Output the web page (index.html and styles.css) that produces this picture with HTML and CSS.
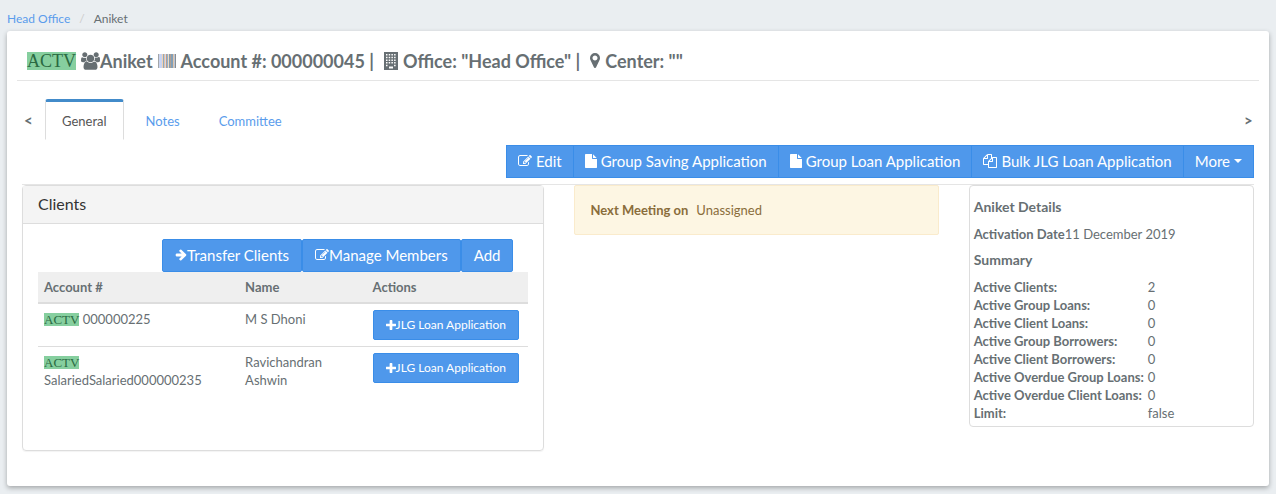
FILE: index.html
```html
<!DOCTYPE html>
<html lang="en">
<head>
<meta charset="utf-8">
<title>Aniket</title>
<link rel="stylesheet" href="styles.css">
</head>
<body>
<svg class="sprite" aria-hidden="true">
  <symbol id="i-file" viewBox="128 0 1536 1792"><path d="M1024 512v-472q22 14 36 28l408 408q14 14 28 36h-472zm-128 32q0 40 28 68t68 28h544v1056q0 40-28 68t-68 28h-1344q-40 0-68-28t-28-68v-1600q0-40 28-68t68-28h800v544z" transform="translate(128 0)"/></symbol>
  <symbol id="i-edit" viewBox="0 0 1792 1792"><path d="M888 1184l116-116-152-152-116 116v56h96v96h56zm440-720q-16-16-33 1l-350 350q-17 17-1 33t33-1l350-350q17-17 1-33zm80 594v190q0 119-84.500 203.500t-203.500 84.500h-832q-119 0-203.500-84.500t-84.500-203.500v-832q0-119 84.500-203.500t203.500-84.500h832q63 0 117 25 15 7 18 23 3 17-9 29l-49 49q-14 14-32 8-23-6-45-6h-832q-66 0-113 47t-47 113v832q0 66 47 113t113 47h832q66 0 113-47t47-113v-126q0-13 9-22l64-64q15-15 35-7t20 29zm-96-738l288 288-672 672h-288v-288zm444 132l-92 92-288-288 92-92q28-28 68-28t68 28l152 152q28 28 28 68t-28 68z"/></symbol>
  <symbol id="i-copy" viewBox="0 0 1792 1792"><path d="M1696 384q40 0 68 28t28 68v1216q0 40-28 68t-68 28h-960q-40 0-68-28t-28-68v-288h-544q-40 0-68-28t-28-68v-672q0-40 20-88t48-76l408-408q28-28 76-48t88-20h416q40 0 68 28t28 68v328q68-40 128-40h416zm-544 213l-299 299h299v-299zm-640-384l-299 299h299v-299zm196 647l316-316v-416h-384v416q0 40-28 68t-68 28h-416v640h512v-256q0-40 20-88t48-76zm956 804v-1152h-384v416q0 40-28 68t-68 28h-416v640h896z"/></symbol>
  <symbol id="i-arrow" viewBox="64 128 1600 1664"><path d="M1600 960q0 54-37 91l-651 651q-39 37-91 37-51 0-90-37l-75-75q-38-38-38-91t38-91l293-293h-704q-52 0-84.500-37.500t-32.500-90.500v-128q0-53 32.500-90.500t84.500-37.500h704l-293-294q-38-36-38-90t38-90l75-75q38-38 90-38 53 0 91 38l651 651q37 35 37 90z"/></symbol>
  <symbol id="i-plus" viewBox="192 128 1408 1408"><path d="M1600 736v192q0 40-28 68t-68 28h-416v416q0 40-28 68t-68 28h-192q-40 0-68-28t-28-68v-416h-416q-40 0-68-28t-28-68v-192q0-40 28-68t68-28h416v-416q0-40 28-68t68-28h192q40 0 68 28t28 68v416h416q40 0 68 28t28 68z"/></symbol>
  <symbol id="i-pin" viewBox="384 128 1024 1536"><path d="M1152 640q0-106-75-181t-181-75-181 75-75 181 75 181 181 75 181-75 75-181zm256 0q0 109-33 179l-364 774q-16 33-47.500 52t-67.500 19-67.500-19-46.500-52l-365-774q-33-70-33-179 0-212 150-362t362-150 362 150 150 362z"/></symbol>
  <symbol id="i-users" viewBox="64 0 1920 1792"><path d="M657 896q-162 5-265 128h-134q-82 0-138-40.500t-56-118.500q0-353 124-353 6 0 43.500 21t97.500 42.500 119 21.500q67 0 133-23-5 37-5 66 0 159 93 290zm1071 637q0 120-73 189.500t-194 69.500h-874q-121 0-194-69.500t-73-189.500q0-53 3.500-103.500t14-109 26.500-108.500 43-97.500 62-81 85.500-53.500 111.500-20q10 0 43 21.500t73 48 107 48 135 21.500 135-21.500 107-48 73-48 43-21.500q61 0 111.500 20t85.500 53.500 62 81 43 97.500 26.500 108.500 14 109 3.500 103.500zm-1024-1277q0 106-75 181t-181 75-181-75-75-181 75-181 181-75 181 75 75 181zm704 384q0 159-112.500 271.500t-271.500 112.500-271.500-112.500-112.500-271.500 112.500-271.500 271.500-112.500 271.500 112.500 112.500 271.500zm576 225q0 78-56 118.500t-138 40.500h-134q-103-123-265-128 93-131 93-290 0-29-5-66 66 23 133 23 59 0 119-21.500t97.500-42.500 43.500-21q124 0 124 353zm-128-609q0 106-75 181t-181 75-181-75-75-181 75-181 181-75 181 75 75 181z"/></symbol>
  <symbol id="i-building" viewBox="0 0 14 18"><path fill-rule="evenodd" d="M0 0h14v18H0zM2 2v1.500h1.500V2zM4.700 2v1.500h1.500V2zM7.400 2v1.500h1.500V2zM10.100 2v1.500h1.500V2zM2 4.700v1.500h1.500V4.700zM4.700 4.700v1.500h1.500V4.700zM7.400 4.700v1.500h1.500V4.700zM10.100 4.700v1.500h1.500V4.700zM2 7.400v1.500h1.500V7.400zM4.700 7.400v1.500h1.500V7.400zM7.400 7.400v1.500h1.500V7.400zM10.100 7.400v1.500h1.500V7.400zM2 10.100v1.500h1.500v-1.500zM4.700 10.100v1.500h1.500v-1.500zM7.400 10.100v1.500h1.500v-1.500zM10.100 10.100v1.500h1.500v-1.500zM2 12.800v1.500h1.500v-1.500zM10.100 12.800v1.500h1.500v-1.500zM5 14.500v2h4v-2z"/></symbol>
  <symbol id="i-barcode" viewBox="0 0 18 14">
    <path fill="#a3a6a8" d="M0 0h1v14H0z"/><path fill="#c9d4f2" d="M1 0h3v14H1z"/><path fill="#f1d2b4" d="M4 0h1v14H4z"/><path fill="#8ba9c2" d="M5 0h1v14H5z"/><path fill="#e8c3a4" d="M6 0h1v14H6z"/><path fill="#ccd8f0" d="M7 0h1v14H7z"/><path fill="#bd9d88" d="M8 0h1v14H8z"/><path fill="#8fb0d0" d="M9 0h1v14H9z"/><path fill="#f0d9bd" d="M10 0h1v14h-1z"/><path fill="#889bab" d="M11 0h1v14h-1z"/><path fill="#b1a093" d="M12 0h1v14h-1z"/><path fill="#829fb7" d="M13 0h2v14h-2z"/><path fill="#e0c3a8" d="M15 0h1v14h-1z"/><path fill="#b8c6da" d="M16 0h1v14h-1z"/><path fill="#888c90" d="M17 0h1v14h-1z"/>
  </symbol>
</svg>

<nav class="breadcrumb" aria-label="Breadcrumb">
  <a href="#">Head Office</a><span class="slash">/</span><span>Aniket</span>
</nav>

<main class="card">
  <h1 class="title">
    <span class="status">ACTV</span>
    <span class="name"><svg class="users"><use href="#i-users"/></svg>Aniket</span>
    <svg class="barcode"><use href="#i-barcode"/></svg>
    <span class="field">Account #: 000000045 |</span>
    <svg class="building"><use href="#i-building"/></svg>
    <span class="field">Office: "Head Office" |</span>
    <svg class="pin"><use href="#i-pin"/></svg>
    <span class="field">Center: ""</span>
  </h1>

  <div class="body">
    <nav class="tabs">
      <button class="scroll" type="button">&lt;</button>
      <a class="tab active" href="#">General</a>
      <a class="tab" href="#">Notes</a>
      <a class="tab" href="#">Committee</a>
      <button class="scroll last" type="button">&gt;</button>
    </nav>

    <div class="toolbar">
      <button class="btn" type="button"><svg class="edit"><use href="#i-edit"/></svg>Edit</button>
      <button class="btn" type="button"><svg class="file"><use href="#i-file"/></svg>Group Saving Application</button>
      <button class="btn" type="button"><svg class="file"><use href="#i-file"/></svg>Group Loan Application</button>
      <button class="btn" type="button"><svg class="edit"><use href="#i-copy"/></svg>Bulk JLG Loan Application</button>
      <button class="btn" type="button">More<span class="caret"></span></button>
    </div>

    <div class="columns">
      <section class="panel">
        <h2 class="panel-head">Clients</h2>
        <div class="panel-body">
          <div class="actions">
            <button class="btn" type="button"><svg class="arrow"><use href="#i-arrow"/></svg>Transfer Clients</button>
            <button class="btn" type="button"><svg class="edit"><use href="#i-edit"/></svg>Manage Members</button>
            <button class="btn" type="button">Add</button>
          </div>
          <table class="clients">
            <thead><tr><th class="c-account">Account #</th><th class="c-name">Name</th><th>Actions</th></tr></thead>
            <tbody>
              <tr>
                <td><span class="status small">ACTV</span> 000000225</td>
                <td>M S Dhoni</td>
                <td><button class="btn btn-small" type="button"><svg class="plus"><use href="#i-plus"/></svg>JLG Loan Application</button></td>
              </tr>
              <tr>
                <td><span class="status small">ACTV</span> SalariedSalaried000000235</td>
                <td>Ravichandran Ashwin</td>
                <td><button class="btn btn-small" type="button"><svg class="plus"><use href="#i-plus"/></svg>JLG Loan Application</button></td>
              </tr>
            </tbody>
          </table>
        </div>
      </section>

      <div class="meeting"><strong>Next Meeting on</strong><span>Unassigned</span></div>

      <section class="details">
        <h3>Aniket Details</h3>
        <p><strong>Activation Date</strong>11 December 2019</p>
        <h3>Summary</h3>
        <table class="summary">
          <tr><th>Active Clients:</th><td>2</td></tr>
          <tr><th>Active Group Loans:</th><td>0</td></tr>
          <tr><th>Active Client Loans:</th><td>0</td></tr>
          <tr><th>Active Group Borrowers:</th><td>0</td></tr>
          <tr><th>Active Client Borrowers:</th><td>0</td></tr>
          <tr><th>Active Overdue Group Loans:</th><td>0</td></tr>
          <tr><th>Active Overdue Client Loans:</th><td>0</td></tr>
          <tr><th>Limit:</th><td>false</td></tr>
        </table>
      </section>
    </div>
  </div>
</main>
</body>
</html>
```
FILE: styles.css
```css
* { box-sizing: border-box; }

body {
  margin: 0;
  padding: 10px 7px 8px;
  background: #eaeef1;
  color: #676f73;
  font: 13px/18px Muli, Lato, sans-serif;
}

.sprite { display: none; }
svg { fill: currentColor; flex: none; }
a { color: #5a9cec; text-decoration: none; }
button { font: inherit; color: inherit; }
h1, h2, h3, p { margin: 0; }

.breadcrumb { display: flex; font-size: 12px; padding-bottom: 3px; }
.slash { color: #ccc; padding: 0 9px; }

.card {
  background: #fff;
  border-radius: 3px;
  box-shadow: 0 2px 5px rgba(0, 0, 0, .3);
  padding: 10px 10px 35px;
}

.title {
  display: flex;
  align-items: center;
  gap: 5px;
  height: 40px;
  padding: 0 10px;
  border-bottom: 1px solid #e5e5e5;
  font-size: 18px;
  line-height: 20px;
  white-space: nowrap;
}
.name { display: flex; align-items: center; }
.field { margin-right: 5px; }

.status {
  display: inline-block;
  background: #86cf9f;
  color: #2a6a42;
  font: 18px/18px "Liberation Serif", serif;
}
.status.small { font-size: 13px; line-height: 13px; }

.users { width: 19px; height: 18px; }
.barcode { width: 18px; height: 14px; }
.building { width: 14px; height: 18px; }
.pin { width: 10px; height: 15px; }

.body { padding: 18px 5px 0; }

.tabs { display: flex; height: 41px; }
.tab {
  padding: 10px 16px 8px;
  border: 1px solid transparent;
  border-top-width: 3px;
  margin-right: 5px;
}
.tab.active {
  color: #555;
  border-color: #428bca #ddd transparent;
  border-radius: 3px 3px 0 0;
}
.scroll {
  width: 23px;
  padding: 0 12px 0 2px;
  border: 0;
  background: none;
  font-size: 15px;
  font-weight: bold;
  text-align: left;
}
.scroll.last { margin-left: auto; width: 10px; padding: 0; }

.btn {
  display: inline-flex;
  align-items: center;
  height: 33px;
  padding: 0 12px 2px;
  border: 1px solid #3a8de8;
  border-radius: 2px;
  background: #4f98eb;
  color: #fff;
  font-size: 15px;
  white-space: nowrap;
}
.edit { width: 14px; height: 14px; }
.file { width: 12px; height: 14px; }
.arrow { width: 12px; height: 12px; }
.plus { width: 10px; height: 10px; }
.caret {
  margin-left: 4px;
  border: 4px solid transparent;
  border-top-color: #fff;
  border-bottom: 0;
}

.toolbar { display: flex; justify-content: flex-end; margin: 5px 0 6px; }
.toolbar .btn { padding: 0 11px 2px; border-radius: 0; }
.toolbar .btn + .btn { margin-left: -1px; }
.toolbar svg { margin-right: 4px; }

.columns {
  display: grid;
  grid-template-columns: 522fr 364fr 285fr;
  gap: 30px;
  align-items: start;
  border-top: 1px solid #e5e5e5;
}

.panel { border: 1px solid #ddd; border-radius: 4px; box-shadow: 0 1px 1px rgba(0, 0, 0, .05); }
.panel-head {
  padding: 9px 15px 10px;
  border-bottom: 1px solid #ddd;
  background: #f4f4f4;
  color: #333;
  font-size: 16px;
  line-height: 18px;
  font-weight: normal;
}
.panel-body { padding: 15px 15px 55px; }
.actions { display: flex; justify-content: flex-end; padding-right: 15px; }

.clients { width: 100%; border-collapse: collapse; table-layout: fixed; }
.clients th, .clients td { padding: 6px; text-align: left; vertical-align: top; }
.clients th { background: #efefef; border-bottom: 2px solid #ddd; }
.clients tr + tr td { border-top: 1px solid #ddd; }
.c-account { width: 41%; }
.c-name { width: 26%; }
.btn-small { display: flex; height: 30px; padding: 0 12px; font-size: 12px; }

.meeting {
  display: flex;
  gap: 8px;
  padding: 15px;
  border: 1px solid #faebcc;
  border-radius: 2px;
  background: #fdf6e3;
  color: #8a6d3b;
}

.details { padding: 12px 4px 4px; border: 1px solid #ddd; border-radius: 4px; }
.details h3 { font-size: 14px; line-height: 18px; }
.details p { margin: 9px 0 8px; }
.summary { margin-top: 9px; border-collapse: collapse; }
.summary th, .summary td { padding: 0; text-align: left; }
.summary th { padding-right: 4px; }
```
